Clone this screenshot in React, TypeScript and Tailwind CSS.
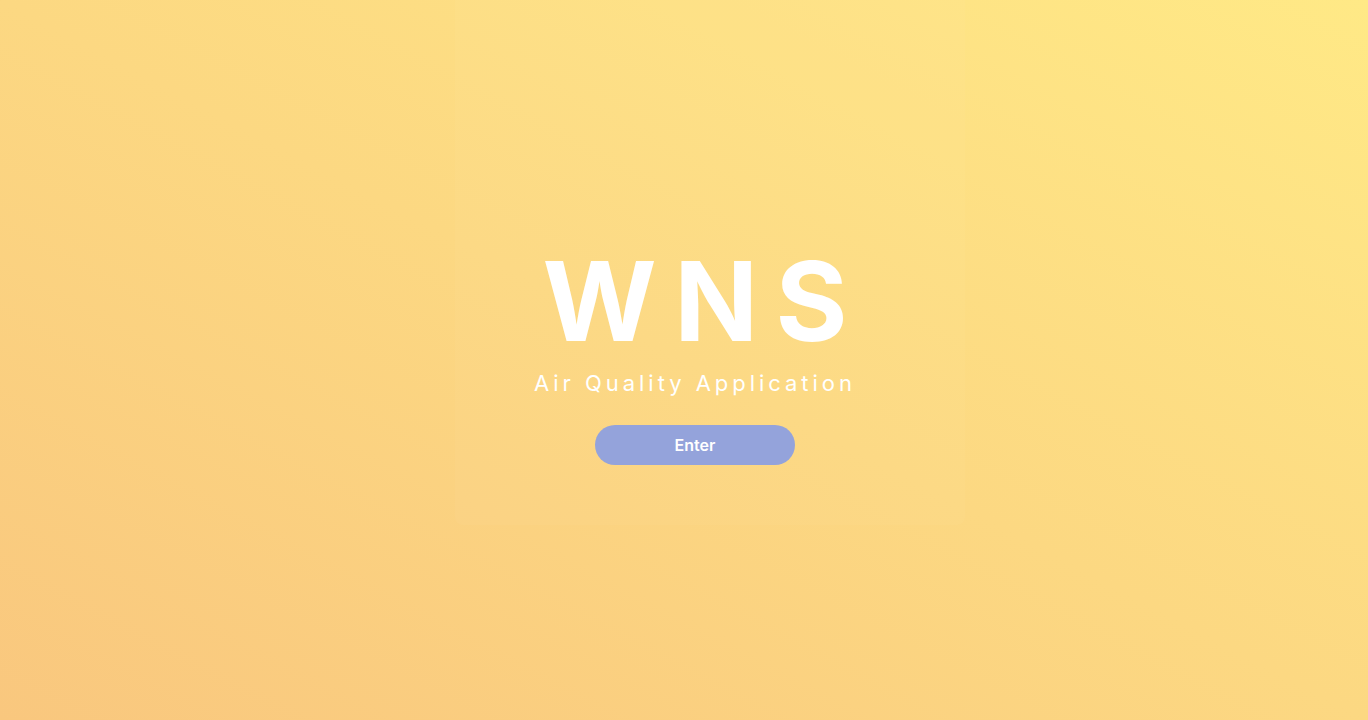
import React from 'react';

const App = () => {
  return (
    <div
      className="relative w-full h-[720px] overflow-hidden bg-gradient-to-tr from-[#f9c77e] via-[#fcd882] to-[#ffe986] flex items-center justify-center pl-[22px] pb-[10px]"
      style={{ fontFamily: 'Inter, "Noto Sans", sans-serif' }}
    >
      {/* faint glass panel behind the hero */}
      <div className="absolute left-[455px] top-0 w-[510px] h-[525px] bg-white/[0.03] rounded-b-lg" />

      <div className="relative flex flex-col items-center">
        <h1 className="text-[110px] leading-none font-bold text-white tracking-[0.16em] pl-[0.16em]">
          WNS
        </h1>
        <p className="mt-[16px] text-[22px] leading-none font-normal text-white tracking-[0.18em] pl-[0.18em] mr-[4px]">
          Air Quality Application
        </p>
        <button className="mt-[31px] w-[200px] h-10 rounded-full bg-[#94a3db] text-white text-base font-semibold">
          Enter
        </button>
      </div>
    </div>
  );
};

export default App;
